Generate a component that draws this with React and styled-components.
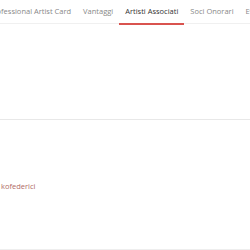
import React from 'react'
import styled, { createGlobalStyle } from 'styled-components'

const GlobalStyle = createGlobalStyle`
  html, body {
    margin: 0;
    padding: 0;
    background: #fff;
    overflow: hidden;
  }
  body {
    font-family: "Open Sans", "Liberation Sans", sans-serif;
  }
`

const Page = styled.div`
  width: 250px;
  height: 250px;
  overflow: hidden;
  display: flex;
  flex-direction: column;
`

const TabBar = styled.ul`
  display: flex;
  margin: 0 0 0 -17px;
  padding: 0;
  list-style: none;
  height: 23px;
  border-bottom: 1px solid #f0f0f0;
  white-space: nowrap;
`

const Tab = styled.li`
  padding: 4px 6px 0;
  height: 19px;
  font-size: 7.5px;
  line-height: 14px;
  color: ${(p) => (p.active ? '#333' : '#888')};
  border-bottom: 2px solid ${(p) => (p.active ? '#d9534f' : 'transparent')};
  flex-shrink: 0;
`

const Band = styled.div`
  height: 95px;
  border-bottom: 1px solid #e8e8e8;
  flex-shrink: 0;
`

const Body = styled.div`
  flex: 1;
  padding: 52px 0 0 1px;
  border-bottom: 1px solid #eee;
`

const Handle = styled.a`
  font-size: 7.5px;
  line-height: 10px;
  color: #b06a66;
  text-decoration: none;
`

const tabs = ['Professional Artist Card', 'Vantaggi', 'Artisti Associati', 'Soci Onorari', 'Eventi']

export default function App() {
  return (
    <Page>
      <GlobalStyle />
      <TabBar>
        {tabs.map((t) => (
          <Tab key={t} active={t === 'Artisti Associati'}>
            {t}
          </Tab>
        ))}
      </TabBar>
      <Band />
      <Body>
        <Handle href="#">kofederici</Handle>
      </Body>
    </Page>
  )
}
